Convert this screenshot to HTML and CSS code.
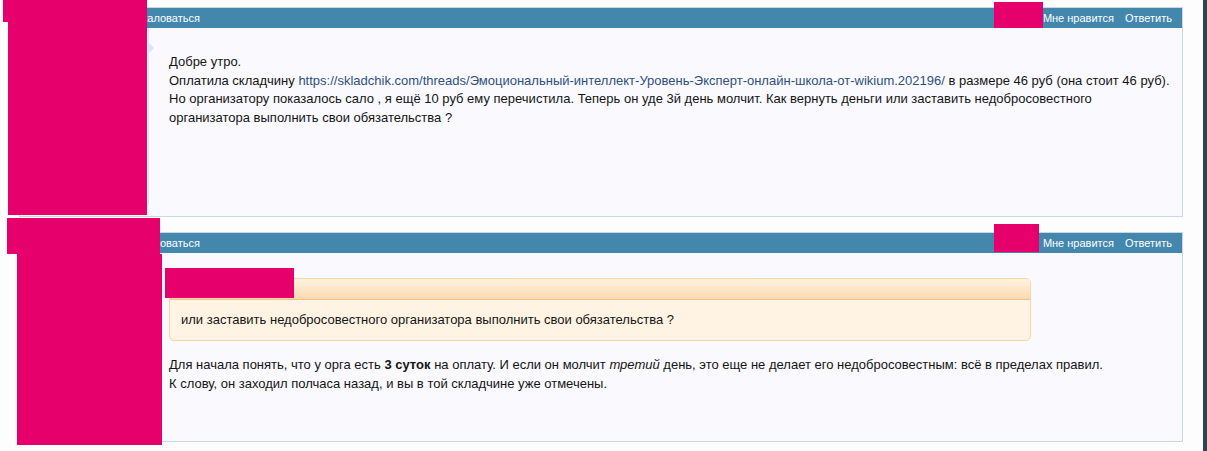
FILE: index.html
```html
<!DOCTYPE html>
<html lang="ru">
<head>
<meta charset="utf-8">
<title>Сообщения</title>
<link rel="stylesheet" href="styles.css">
</head>
<body>
<div class="page">
  <div class="thread">
    <article class="post">
      <div class="post-bar">
        <a class="bar-link bar-report">Пожаловаться</a>
        <div class="bar-actions">
          <a class="bar-link">Мне нравится</a>
          <a class="bar-link">Ответить</a>
        </div>
      </div>
      <div class="post-body">
        <div class="user-block"><span class="arrow"></span></div>
        <div class="message">
          <p>Добре утро.<br>
          Оплатила складчину <a class="link" href="#">https://skladchik.com/threads/Эмоциональный-интеллект-Уровень-Эксперт-онлайн-школа-от-wikium.202196/</a> в размере 46 руб (она стоит 46 руб).<br>
          Но организатору показалось сало , я ещё 10 руб ему перечистила. Теперь он уде 3й день молчит. Как вернуть деньги или заставить недобросовестного организатора выполнить свои обязательства ?</p>
        </div>
      </div>
    </article>

    <article class="post">
      <div class="post-bar">
        <a class="bar-link bar-report">Пожаловаться</a>
        <div class="bar-actions">
          <a class="bar-link">Мне нравится</a>
          <a class="bar-link">Ответить</a>
        </div>
      </div>
      <div class="post-body">
        <div class="user-block"><span class="arrow"></span></div>
        <div class="message message-reply">
          <div class="quote">
            <div class="quote-head"></div>
            <div class="quote-body">или заставить недобросовестного организатора выполнить свои обязательства ?</div>
          </div>
          <p>Для начала понять, что у орга есть <b>3 суток</b> на оплату. И если он молчит <i>третий</i> день, это еще не делает его недобросовестным: всё в пределах правил.<br>
          К слову, он заходил полчаса назад, и вы в той складчине уже отмечены.</p>
        </div>
      </div>
    </article>
  </div>
  <div class="edge"></div>

  <div class="redact r1a"></div>
  <div class="redact r1b"></div>
  <div class="redact r1c"></div>
  <div class="redact r2a"></div>
  <div class="redact r2b"></div>
  <div class="redact r2c"></div>
  <div class="redact r2d"></div>
</div>
</body>
</html>
```

FILE: styles.css
```css
html, body {
  margin: 0;
  padding: 0;
  background: #fdfdfe;
}

.page {
  position: relative;
  display: flex;
  min-height: 451px;
  font-family: "Liberation Sans", Arial, sans-serif;
  color: #141414;
}

.thread {
  flex: 1;
  padding: 7px 20px 0 19px;
  display: flex;
  flex-direction: column;
  gap: 15px;
}

.edge {
  width: 4px;
  background: #2e4450;
}

.post {
  border: 1px solid #c9d6e3;
  background: #fafafe;
}

.post-bar {
  height: 20px;
  background: #4387ad;
  display: flex;
  align-items: center;
  justify-content: space-between;
  font-size: 11px;
}

.bar-link {
  color: #ffffff;
  text-decoration: none;
}

.bar-report {
  margin-left: 106px;
}

.bar-actions {
  display: flex;
  gap: 11px;
  padding-right: 10px;
}

.post-body {
  display: flex;
}

.user-block {
  position: relative;
  width: 128px;
  height: 180px;
  margin-bottom: 8px;
  border-right: 1px solid #d6e2ee;
  border-bottom-right-radius: 5px;
}

.arrow {
  position: absolute;
  right: -6px;
  top: 15px;
  width: 0;
  height: 0;
  border-top: 5px solid transparent;
  border-bottom: 5px solid transparent;
  border-left: 5px solid #d6e8f6;
}

.message {
  flex: 1;
  padding: 25px 10px 0 20px;
  font-size: 13px;
  line-height: 18.5px;
}

.message p {
  margin: 0;
}

.link {
  color: #2e4f7e;
  text-decoration: none;
}

.message-reply {
  padding-top: 25px;
}

.quote {
  margin: 0 141px 15px 0;
  border: 1px solid #fcd59f;
  border-radius: 5px;
  background: #fff4e4;
  overflow: hidden;
}

.quote-head {
  height: 20px;
  background: linear-gradient(#fff2df, #fbdab2);
  border-bottom: 1px solid #f9c37d;
}

.quote-body {
  padding: 10px 11px 11px;
  line-height: 19px;
}

.redact {
  position: absolute;
  background: #e5006b;
}

.r1a { left: 3px; top: 0; width: 144px; height: 22px; }
.r1b { left: 8px; top: 22px; width: 139px; height: 193px; }
.r1c { left: 994px; top: 2px; width: 49px; height: 26px; }
.r2a { left: 7px; top: 218px; width: 153px; height: 36px; }
.r2b { left: 17px; top: 254px; width: 145px; height: 191px; }
.r2c { left: 994px; top: 224px; width: 45px; height: 28px; }
.r2d { left: 165px; top: 268px; width: 129px; height: 30px; }
```
